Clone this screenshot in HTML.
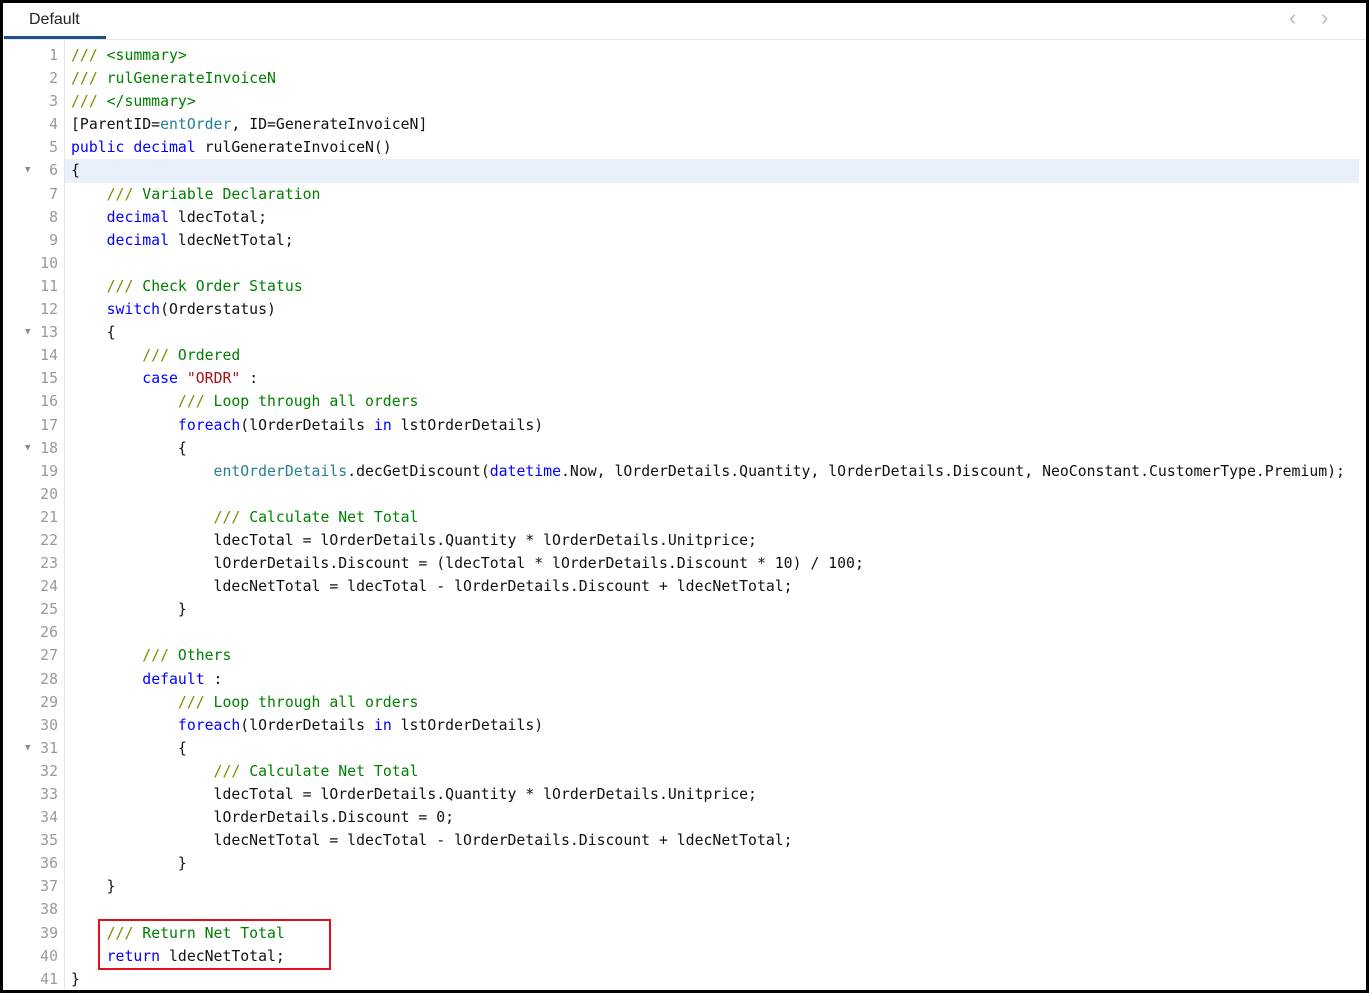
<!DOCTYPE html>
<html><head><style>
body{margin:0;width:1369px;height:993px;background:#000;overflow:hidden;position:relative}
#w{position:absolute;left:3px;top:3px;width:1363px;height:987px;background:#fff}
.tab{position:absolute;left:26px;top:8px;font:16px "Liberation Sans",sans-serif;color:#222}
.ul{position:absolute;left:1px;top:33px;width:102px;height:3px;background:#1f4e8c}
.hr{position:absolute;left:1px;top:36px;right:0;height:1px;background:#e6e6e6}
.gut{position:absolute;left:0;top:37px;width:61px;height:950px;background:#fff;border-right:1px solid #e4e4e4}
.code{position:absolute;left:0;top:41px;width:1363px;font:14.8px "DejaVu Sans Mono",monospace}
.r{position:relative;height:23.1px;line-height:23.1px;white-space:pre}
.n{position:absolute;left:0;width:55px;text-align:right;color:#999}
.t{position:absolute;left:68px;color:#111}
.hl{background:#e8f0fc;margin-left:62px;margin-right:7px}
.hl .n{left:-62px}.hl .t{left:6px}
.f{position:absolute;left:22px;color:#888;font-size:9px}
.hl .f{left:-40px}
.c{color:#008000}.s{color:#7f8a00}.k{color:#0000ff}.y{color:#267f99}.st{color:#a31515}
.box{position:absolute;left:95px;top:916px;width:229px;height:47px;border:2px solid #e0101e}
.ar{position:absolute;top:2px;color:#bbb;font:22px "Liberation Sans",sans-serif}
</style></head><body><div id="w">
<div class="tab">Default</div><div class="ul"></div><div class="hr"></div>
<div class="ar" style="left:1286px">&#8249;</div><div class="ar" style="left:1318px">&#8250;</div>
<div class="gut"></div>
<div class="code">
<div class="r"><span class="n">1</span><span class="t"><span class="s">///</span><span class="c"> &lt;summary&gt;</span></span></div>
<div class="r"><span class="n">2</span><span class="t"><span class="s">///</span><span class="c"> rulGenerateInvoiceN</span></span></div>
<div class="r"><span class="n">3</span><span class="t"><span class="s">///</span><span class="c"> &lt;/summary&gt;</span></span></div>
<div class="r"><span class="n">4</span><span class="t">[ParentID=<span class="y">entOrder</span>, ID=GenerateInvoiceN]</span></div>
<div class="r"><span class="n">5</span><span class="t"><span class="k">public decimal</span> rulGenerateInvoiceN()</span></div>
<div class="r hl"><span class="f">▼</span><span class="n">6</span><span class="t">{</span></div>
<div class="r"><span class="n">7</span><span class="t">    <span class="s">///</span><span class="c"> Variable Declaration</span></span></div>
<div class="r"><span class="n">8</span><span class="t">    <span class="k">decimal</span> ldecTotal;</span></div>
<div class="r"><span class="n">9</span><span class="t">    <span class="k">decimal</span> ldecNetTotal;</span></div>
<div class="r"><span class="n">10</span><span class="t"></span></div>
<div class="r"><span class="n">11</span><span class="t">    <span class="s">///</span><span class="c"> Check Order Status</span></span></div>
<div class="r"><span class="n">12</span><span class="t">    <span class="k">switch</span>(Orderstatus)</span></div>
<div class="r"><span class="f">▼</span><span class="n">13</span><span class="t">    {</span></div>
<div class="r"><span class="n">14</span><span class="t">        <span class="s">///</span><span class="c"> Ordered</span></span></div>
<div class="r"><span class="n">15</span><span class="t">        <span class="k">case</span> <span class="st">"ORDR"</span> :</span></div>
<div class="r"><span class="n">16</span><span class="t">            <span class="s">///</span><span class="c"> Loop through all orders</span></span></div>
<div class="r"><span class="n">17</span><span class="t">            <span class="k">foreach</span>(lOrderDetails <span class="k">in</span> lstOrderDetails)</span></div>
<div class="r"><span class="f">▼</span><span class="n">18</span><span class="t">            {</span></div>
<div class="r"><span class="n">19</span><span class="t">                <span class="y">entOrderDetails</span>.decGetDiscount(<span class="k">datetime</span>.Now, lOrderDetails.Quantity, lOrderDetails.Discount, NeoConstant.CustomerType.Premium);</span></div>
<div class="r"><span class="n">20</span><span class="t"></span></div>
<div class="r"><span class="n">21</span><span class="t">                <span class="s">///</span><span class="c"> Calculate Net Total</span></span></div>
<div class="r"><span class="n">22</span><span class="t">                ldecTotal = lOrderDetails.Quantity * lOrderDetails.Unitprice;</span></div>
<div class="r"><span class="n">23</span><span class="t">                lOrderDetails.Discount = (ldecTotal * lOrderDetails.Discount * 10) / 100;</span></div>
<div class="r"><span class="n">24</span><span class="t">                ldecNetTotal = ldecTotal - lOrderDetails.Discount + ldecNetTotal;</span></div>
<div class="r"><span class="n">25</span><span class="t">            }</span></div>
<div class="r"><span class="n">26</span><span class="t"></span></div>
<div class="r"><span class="n">27</span><span class="t">        <span class="s">///</span><span class="c"> Others</span></span></div>
<div class="r"><span class="n">28</span><span class="t">        <span class="k">default</span> :</span></div>
<div class="r"><span class="n">29</span><span class="t">            <span class="s">///</span><span class="c"> Loop through all orders</span></span></div>
<div class="r"><span class="n">30</span><span class="t">            <span class="k">foreach</span>(lOrderDetails <span class="k">in</span> lstOrderDetails)</span></div>
<div class="r"><span class="f">▼</span><span class="n">31</span><span class="t">            {</span></div>
<div class="r"><span class="n">32</span><span class="t">                <span class="s">///</span><span class="c"> Calculate Net Total</span></span></div>
<div class="r"><span class="n">33</span><span class="t">                ldecTotal = lOrderDetails.Quantity * lOrderDetails.Unitprice;</span></div>
<div class="r"><span class="n">34</span><span class="t">                lOrderDetails.Discount = 0;</span></div>
<div class="r"><span class="n">35</span><span class="t">                ldecNetTotal = ldecTotal - lOrderDetails.Discount + ldecNetTotal;</span></div>
<div class="r"><span class="n">36</span><span class="t">            }</span></div>
<div class="r"><span class="n">37</span><span class="t">    }</span></div>
<div class="r"><span class="n">38</span><span class="t"></span></div>
<div class="r"><span class="n">39</span><span class="t">    <span class="s">///</span><span class="c"> Return Net Total</span></span></div>
<div class="r"><span class="n">40</span><span class="t">    <span class="k">return</span> ldecNetTotal;</span></div>
<div class="r"><span class="n">41</span><span class="t">}</span></div>
</div>
<div class="box"></div>
</div></body></html>
